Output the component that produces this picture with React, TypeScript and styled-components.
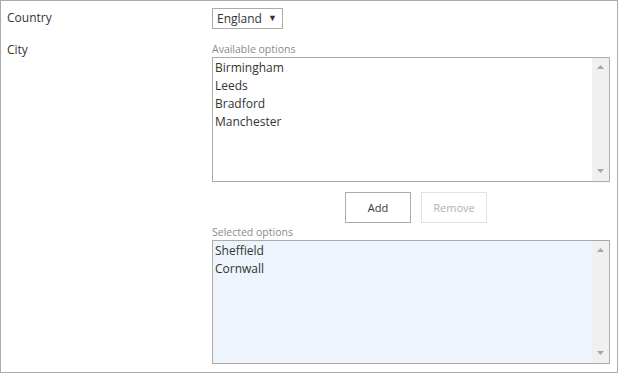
import React from 'react'
import styled, { createGlobalStyle } from 'styled-components'

const GlobalStyle = createGlobalStyle`
    html, body {
        margin: 0;
        padding: 0;
        background: #fff;
    }
    body {
        font-family: "Open Sans", "Noto Sans", sans-serif;
        font-size: 12px;
        color: #333;
    }
`

interface ListBoxProps {
    selected?: boolean
}

interface ActionButtonProps {
    disabled?: boolean
}

const Panel = styled.div`
    box-sizing: border-box;
    width: 618px;
    height: 373px;
    border: 1px solid #ababab;
    padding: 7px 6px 0 6px;
    display: grid;
    grid-template-columns: 205px 398px;
    grid-template-rows: 21px auto;
    row-gap: 13px;
`

const FieldLabel = styled.div`
    font-size: 12px;
    line-height: 18px;
    padding-top: 1px;
    color: #333;
`

const CityLabel = styled(FieldLabel)`
    margin-top: -2px;
`

const SelectBox = styled.div`
    box-sizing: border-box;
    width: 71px;
    height: 21px;
    border: 1px solid #ababab;
    display: flex;
    align-items: center;
    justify-content: space-between;
    padding: 0 5px 0 4px;
    font-size: 12px;
    color: #333;
    cursor: pointer;
`

const Caret = styled.span`
    font-size: 9px;
    color: #333;
    line-height: 1;
    margin-top: -2px;
`

const Picker = styled.div`
    display: flex;
    flex-direction: column;
`

const Caption = styled.div`
    font-size: 10.5px;
    line-height: 15px;
    height: 15px;
    color: #8a8a8a;
`

const ListBox = styled.div<ListBoxProps>`
    box-sizing: border-box;
    width: 398px;
    height: ${props => props.selected ? '124px' : '125px'};
    border: 1px solid #ababab;
    background: ${props => props.selected ? '#edf4fc' : '#fff'};
    display: flex;
`

const Items = styled.ul`
    flex: 1;
    list-style: none;
    margin: 0;
    padding: 1px 0 0 2px;
`

const Item = styled.li`
    font-size: 12px;
    line-height: 18px;
    color: #333;
    cursor: default;
`

const ScrollTrack = styled.div`
    width: 17px;
    background: #f0f0f0;
    display: flex;
    flex-direction: column;
    justify-content: space-between;
    align-items: center;
    padding: 7px 0 8px;
`

const Arrow = styled.svg`
    display: block;
`

const ButtonRow = styled.div`
    display: flex;
    gap: 10px;
    padding-left: 133px;
    margin-top: 10px;
`

const ActionButton = styled.button<ActionButtonProps>`
    box-sizing: border-box;
    width: 66px;
    height: 31px;
    background: #fff;
    border: 1px solid ${props => props.disabled ? '#e1e1e1' : '#ababab'};
    color: ${props => props.disabled ? '#b1b1b1' : '#333'};
    font-family: "Open Sans", "Noto Sans", sans-serif;
    font-size: 11px;
    padding: 0;
    cursor: ${props => props.disabled ? 'default' : 'pointer'};
`

const SelectedCaption = styled(Caption)`
    margin-top: 2px;
`

const Scrollbar: React.FC = () => (
    <ScrollTrack>
        <Arrow width="7" height="4" viewBox="0 0 7 4">
            <path d="M0 4 L3.5 0 L7 4 Z" fill="#a6a6a6" />
        </Arrow>
        <Arrow width="7" height="4" viewBox="0 0 7 4">
            <path d="M0 0 L7 0 L3.5 4 Z" fill="#a6a6a6" />
        </Arrow>
    </ScrollTrack>
)

const available = ['Birmingham', 'Leeds', 'Bradford', 'Manchester']
const selected = ['Sheffield', 'Cornwall']

const App: React.FC = () => {
    return (
        <>
            <GlobalStyle />
            <Panel>
                <FieldLabel>Country</FieldLabel>
                <SelectBox>
                    England <Caret>▼</Caret>
                </SelectBox>

                <CityLabel>City</CityLabel>
                <Picker>
                    <Caption>Available options</Caption>
                    <ListBox>
                        <Items>
                            {available.map(city => <Item key={city}>{city}</Item>)}
                        </Items>
                        <Scrollbar />
                    </ListBox>
                    <ButtonRow>
                        <ActionButton>Add</ActionButton>
                        <ActionButton disabled>Remove</ActionButton>
                    </ButtonRow>
                    <SelectedCaption>Selected options</SelectedCaption>
                    <ListBox selected>
                        <Items>
                            {selected.map(city => <Item key={city}>{city}</Item>)}
                        </Items>
                        <Scrollbar />
                    </ListBox>
                </Picker>
            </Panel>
        </>
    )
}

export default App
